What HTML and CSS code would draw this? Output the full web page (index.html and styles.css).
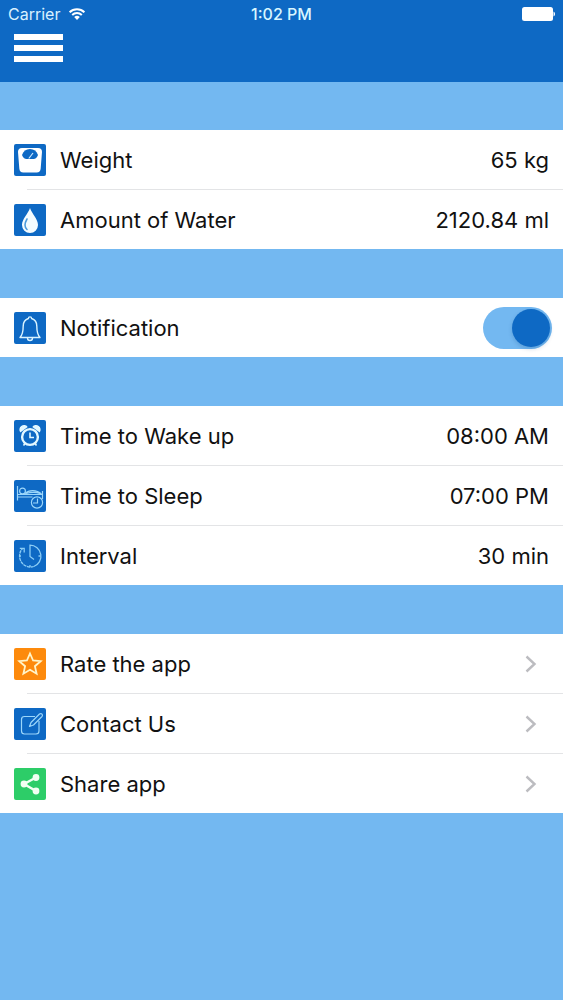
FILE: index.html
```html
<!DOCTYPE html>
<html lang="en">
<head>
<meta charset="utf-8">
<meta name="viewport" content="width=device-width, initial-scale=1">
<title>Settings</title>
<link rel="stylesheet" href="styles.css">
</head>
<body>
<header class="header">
  <div class="status">
    <div class="carrier">
      <span>Carrier</span>
      <svg class="wifi" viewBox="0 0 18 14" aria-hidden="true"><path d="M1.6 5.2a10.6 10.6 0 0 1 14.8 0M4.2 8a6.9 6.9 0 0 1 9.6 0" fill="none" stroke="currentColor" stroke-width="2"/><path d="M9 13L6.2 10.1a4 4 0 0 1 5.6 0z" fill="currentColor"/></svg>
    </div>
    <time class="clock">1:02 PM</time>
    <svg class="battery" viewBox="0 0 34 14" aria-hidden="true"><rect x="1" y="0" width="31" height="14" rx="2.5" fill="currentColor"/><path d="M32.500 4.500c2 1 2 4 0 5z" fill="currentColor"/></svg>
  </div>
  <button class="menu" type="button" aria-label="Menu"><span class="bar"></span><span class="bar"></span><span class="bar"></span></button>
</header>
<main class="settings">
  <section class="group">
    <div class="row">
      <svg class="icon blue" viewBox="0 0 32 32" aria-hidden="true"><path d="M8 4h16q4 0 4 4l-1.300 16.500q-.300 4-4 4H9.300q-3.700 0-4-4L4 8q0-4 4-4z" fill="#fff"/><path d="M8 11q2-6 8-6t8 6q-1.500 4-4.500 4h-7Q9.500 15 8 11z" fill="#0e69c4"/><path d="M14.800 14.500l4.200-5.500" stroke="#cdeaff" stroke-width="1.200"/></svg>
      <div class="line"><span>Weight</span><span class="value">65 kg</span></div>
    </div>
    <div class="row">
      <svg class="icon blue" viewBox="0 0 32 32" aria-hidden="true"><path d="M16 4C14 10 8 15 8 21a8 8 0 0 0 16 0C24 15 18 10 16 4z" fill="#f4fcff"/><path d="M13 15q-4 7 0 10.500" fill="none" stroke="#4e9cdd" stroke-width="1.600" stroke-linecap="round"/></svg>
      <div class="line"><span>Amount of Water</span><span class="value">2120.84 ml</span></div>
    </div>
  </section>
  <section class="group">
    <div class="row">
      <svg class="icon blue" viewBox="0 0 32 32" aria-hidden="true"><g fill="none" stroke="#d9f3ff" stroke-width="1.400" stroke-linejoin="round" stroke-linecap="round"><path d="M14.400 6.500a1.600 1.600 0 1 1 3.200 0C21 7.600 22.800 10 22.800 14c0 6 .4 8.500 3.200 11.500H6c2.800-3 3.200-5.500 3.200-11.500 0-4 1.800-6.400 5.200-7.500z"/><path d="M13.500 26a2.500 2.500 0 0 0 5 0"/></g></svg>
      <div class="line"><label for="notification">Notification</label><input class="switch" id="notification" type="checkbox" role="switch" checked></div>
    </div>
  </section>
  <section class="group">
    <div class="row">
      <svg class="icon blue" viewBox="0 0 32 32" aria-hidden="true"><g fill="none" stroke="#e3f8ff"><circle cx="16" cy="17" r="7.900" stroke-width="2.400"/><path d="M16 12.500V17.500h4" stroke-width="1.600"/><path d="M11 23.500l-1.500 2M21 23.500l1.500 2" stroke-width="1.600"/></g><path d="M6.300 12.500a4.500 4.500 0 0 1 7.400-5.600zM25.700 12.500a4.500 4.500 0 0 0-7.400-5.600z" fill="#e3f8ff"/></svg>
      <div class="line"><span>Time to Wake up</span><span class="value">08:00 AM</span></div>
    </div>
    <div class="row">
      <svg class="icon blue" viewBox="0 0 32 32" aria-hidden="true"><g fill="none" stroke="#9bd6fa" stroke-width="1.200"><path d="M3.500 6v14.500M3.500 14.500h25M3.500 17h15M28.500 11v8"/><circle cx="8.500" cy="11" r="2.900"/><path d="M11 13.500c4-4 11.500-4 16.500.500M12 13.500c5-1.500 10-1.500 14 0"/><circle cx="23" cy="22.500" r="5.600" fill="#0e69c4"/><path d="M23.500 18.500v4.500h-4.500"/></g></svg>
      <div class="line"><span>Time to Sleep</span><span class="value">07:00 PM</span></div>
    </div>
    <div class="row">
      <svg class="icon blue" viewBox="0 0 32 32" aria-hidden="true"><g fill="none" stroke="#8bcdf6" stroke-width="1.300"><path d="M16 9V5.200a11 11 0 0 1 3.800 21.300"/><path d="M19.800 26.500A11 11 0 0 1 8.500 8.500" stroke-dasharray="3.200 .6"/><path d="M5.800 8.400h4.400v4.200"/><path d="M16 9v7.500l4 3M24.500 16h2M16 25v2M5 16h2"/></g></svg>
      <div class="line"><span>Interval</span><span class="value">30 min</span></div>
    </div>
  </section>
  <section class="group">
    <a class="row" href="#rate">
      <svg class="icon orange" viewBox="0 0 32 32" aria-hidden="true"><path d="M16 5.500l3.100 7 7.600.700-5.800 5 1.700 7.500-6.600-4-6.600 4 1.700-7.500-5.800-5 7.600-.700z" fill="none" stroke="#fff4c8" stroke-width="1.800" stroke-linejoin="miter"/></svg>
      <span class="line"><span>Rate the app</span><svg class="chevron" viewBox="0 0 12 18" aria-hidden="true"><path d="M1.500 1.500L9.500 9l-8 7.500"/></svg></span>
    </a>
    <a class="row" href="#contact">
      <svg class="icon blue" viewBox="0 0 32 32" aria-hidden="true"><g fill="none" stroke="#9bd6fa" stroke-width="1.200" stroke-linejoin="round"><path d="M21 8.500H10.500q-3 0-3 3V23q0 3 3 3H22q3 0 3-3V13"/><path d="M15.500 18.500l1.500-4L25.500 6q1.500-1 2.500.200t0 2.300L19.500 17z"/></g></svg>
      <span class="line"><span>Contact Us</span><svg class="chevron" viewBox="0 0 12 18" aria-hidden="true"><path d="M1.500 1.500L9.500 9l-8 7.500"/></svg></span>
    </a>
    <a class="row" href="#share">
      <svg class="icon green" viewBox="0 0 32 32" aria-hidden="true"><path d="M22 9.500L10 16l12 7" fill="none" stroke="#f2fff2" stroke-width="2.400"/><g fill="#f2fff2"><circle cx="22" cy="9.500" r="3.400"/><circle cx="10" cy="16" r="3.400"/><circle cx="22" cy="23" r="3.400"/></g></svg>
      <span class="line"><span>Share app</span><svg class="chevron" viewBox="0 0 12 18" aria-hidden="true"><path d="M1.500 1.500L9.500 9l-8 7.500"/></svg></span>
    </a>
  </section>
</main>
</body>
</html>
```
FILE: styles.css
```css
* {
  box-sizing: border-box;
}

body {
  margin: 0;
  min-height: 100vh;
  background: #73b8f1;
  color: #111;
  font-family: Inter, "Liberation Sans", sans-serif;
  font-size: 22px;
  line-height: 28px;
}

.header {
  padding-bottom: 20px;
  background: #0e69c4;
  color: #fff;
}

.status {
  display: grid;
  grid-template-columns: 1fr auto 1fr;
  align-items: center;
  padding: 4px 8px 0;
  font-size: 16px;
  line-height: 20px;
}

.carrier {
  display: flex;
  align-items: center;
  gap: 8px;
  color: #d8f1ff;
}

.clock {
  color: #d8f6ff;
  font-weight: 500;
}

.wifi {
  width: 18px;
  height: 14px;
  color: #fff;
}

.battery {
  width: 34px;
  height: 14px;
  justify-self: end;
}

.menu {
  display: flex;
  flex-direction: column;
  gap: 5px;
  margin: 10px 0 0 14px;
  padding: 0;
  border: 0;
  background: none;
}

.bar {
  width: 49px;
  height: 6px;
  background: #fff;
}

.settings {
  display: flex;
  flex-direction: column;
  gap: 49px;
  padding: 48px 0;
}

.group {
  background: #fff;
}

.row {
  display: flex;
  align-items: center;
  gap: 14px;
  padding-left: 14px;
  color: inherit;
  text-decoration: none;
}

.row + .row {
  border-top: 1px solid #e3e4e6;
  border-image: linear-gradient(to right, transparent 28px, #e3e4e6 28px) 1;
}

.icon {
  flex: none;
  width: 32px;
  height: 32px;
  border-radius: 2px;
}

.blue {
  background: #0e69c4;
}

.orange {
  background: #fd8a0c;
}

.green {
  background: #2dcd68;
}

.line {
  display: flex;
  flex: 1;
  align-items: center;
  justify-content: space-between;
  height: 59px;
  padding-right: 14px;
}

.chevron {
  width: 12px;
  height: 18px;
  margin-right: 12px;
  fill: none;
  stroke: #bcbcc0;
  stroke-width: 2.4;
}

.switch {
  appearance: none;
  display: flex;
  justify-content: flex-end;
  width: 69px;
  height: 42px;
  margin: 0 -3px 0 0;
  padding: 2px;
  border-radius: 21px;
  background: #73b8f1;
}

.switch::before {
  content: "";
  width: 38px;
  height: 38px;
  border-radius: 50%;
  background: #0e69c4;
  box-shadow: 0 2px 4px rgb(0 60 120 / 20%);
}

.switch:not(:checked) {
  justify-content: flex-start;
  background: #d5dbe2;
}
```
